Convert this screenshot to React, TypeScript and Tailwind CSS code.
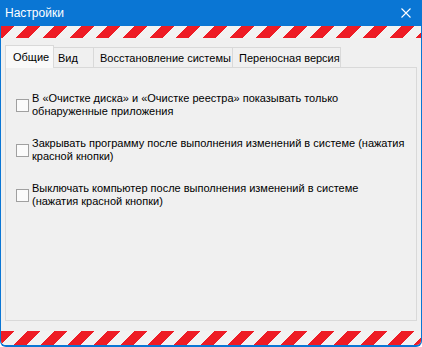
import React from 'react'

const stripes =
  'bg-[repeating-linear-gradient(135deg,#ee1c25_0px,#ee1c25_9.4px,#f2f2f2_9.4px,#f2f2f2_18.86px)]'

const tabs = [
  { label: 'Общие', w: 'w-[49px]', pl: 'pl-[7px]', active: true },
  { label: 'Вид', w: 'w-[40px]', pl: 'pl-[4px]', active: false },
  { label: 'Восстановление системы', w: 'w-[139px]', pl: 'pl-[6px]', active: false },
  { label: 'Переносная версия', w: 'w-[108px]', pl: 'pl-[6px]', active: false },
]

const options = [
  ['В «Очистке диска» и «Очистке реестра» показывать только', 'обнаруженные приложения'],
  ['Закрывать программу после выполнения изменений в системе (нажатия', 'красной кнопки)'],
  ['Выключать компьютер после выполнения изменений в системе', '(нажатия красной кнопки)'],
]

export default function App() {
  return (
    <div className="w-[422px] h-[347px] flex flex-col bg-[#f0f0f0] border-x border-b-2 border-[#0a76d4] rounded-b-[6px] overflow-hidden font-['Segoe_UI','Liberation_Sans',sans-serif] text-[11px] text-black">
      {/* title bar */}
      <div className="h-[26px] shrink-0 bg-[#0a76d4] flex items-center justify-between pl-[4px] pr-[10px] text-white text-[12px]">
        <span className="leading-none">Настройки</span>
        <svg width="10" height="10" viewBox="0 0 10 10" className="text-white">
          <path d="M0.5 0.5L9.5 9.5M9.5 0.5L0.5 9.5" stroke="currentColor" strokeWidth="1.1" />
        </svg>
      </div>

      <div className={`h-[12px] shrink-0 ${stripes}`} />

      <div className="flex-1 flex flex-col px-[4px] pt-[7px] pb-[10px]">
        <div className="h-[22px] flex items-end relative z-10">
          {tabs.map((t) =>
            t.active ? (
              <div
                key={t.label}
                className={`${t.w} ${t.pl} h-[23px] -mb-px flex items-center bg-[#f9f9f9] border-x border-t border-[#d9d9d9]`}
              >
                {t.label}
              </div>
            ) : (
              <div
                key={t.label}
                className={`${t.w} ${t.pl} h-[21px] -mb-px flex items-center border-t border-r border-[#d9d9d9] whitespace-nowrap`}
              >
                {t.label}
              </div>
            )
          )}
        </div>

        <div className="flex-1 border border-[#d9d9d9] pl-[10px] pt-[24px] flex flex-col gap-[19px]">
          {options.map((lines, i) => (
            <div key={i} className="flex items-center gap-[2px]">
              <div className="w-[13px] h-[13px] border border-[#a0a0a0] bg-[#fbfbfb] shrink-0" />
              <div className="leading-[13px] whitespace-nowrap pl-[1px]">
                {lines[0]}
                <br />
                {lines[1]}
              </div>
            </div>
          ))}
        </div>
      </div>

      <div className={`h-[14px] shrink-0 ${stripes}`} />
    </div>
  )
}
